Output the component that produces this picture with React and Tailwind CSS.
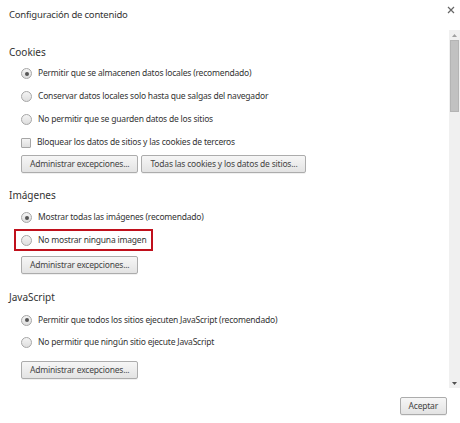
import React from "react";

const font = { fontFamily: '"Noto Sans", "Open Sans", Arial, sans-serif' };

function Radio({ checked }) {
  return (
    <span className="relative inline-block w-[11px] h-[11px] rounded-full border border-[#a6a6a6] bg-gradient-to-b from-[#f4f4f4] to-[#dedede] shrink-0">
      {checked && (
        <span className="absolute left-[2.5px] top-[2.5px] w-[4px] h-[4px] rounded-full bg-[#555]" />
      )}
    </span>
  );
}

function Check() {
  return (
    <span className="inline-block w-[10px] h-[10px] rounded-[1px] border border-[#a6a6a6] bg-gradient-to-b from-[#f4f4f4] to-[#dedede] shrink-0" />
  );
}

function Row({ children, control, h = "h-[23px]" }) {
  return (
    <div className={h + " flex items-center pl-[12px] gap-[6px] text-[8.5px] tracking-[-0.2px] text-[#333]"}>
      {control}
      <span>{children}</span>
    </div>
  );
}

function Btn({ children, className = "" }) {
  return (
    <button className={"h-[18px] px-[8px] rounded-[2px] border border-[#acacac] bg-gradient-to-b from-[#f6f6f6] to-[#e3e3e3] text-[8.5px] tracking-[-0.2px] text-[#444] leading-none shadow-[0_1px_0_rgba(0,0,0,0.06)] " + className}>
      {children}
    </button>
  );
}

function Heading({ children, className = "" }) {
  return <div className={"h-[16px] flex items-center text-[10px] text-[#333] " + className}>{children}</div>;
}

export default function App() {
  return (
    <div className="w-[460px] h-[423px] bg-white flex flex-col overflow-hidden" style={font}>
      <div className="h-[30px] flex items-start justify-between">
        <div className="pl-[9px] pt-[7px] text-[9.5px] tracking-[-0.2px] text-[#333] leading-[16px]">Configuración de contenido</div>
        <div className="pr-[5px] pt-[6px] flex">
          <svg width="8" height="8" viewBox="0 0 8 8">
            <path d="M1 1L7 7M7 1L1 7" stroke="#666" strokeWidth="1.2" />
          </svg>
        </div>
      </div>
      <div className="h-[358px] flex">
        <div className="flex-1 pl-[9px] flex flex-col">
          <Heading className="mt-[14px]">Cookies</Heading>
          <div className="mt-[2px]">
            <Row control={<Radio checked />}>Permitir que se almacenen datos locales (recomendado)</Row>
            <Row control={<Radio />}>Conservar datos locales solo hasta que salgas del navegador</Row>
            <Row control={<Radio />}>No permitir que se guarden datos de los sitios</Row>
            <Row control={<Check />}>Bloquear los datos de sitios y las cookies de terceros</Row>
          </div>
          <div className="flex gap-[3px] pl-[12px] mt-[1px]">
            <Btn>Administrar excepciones...</Btn>
            <Btn className="px-[7px]">Todas las cookies y los datos de sitios...</Btn>
          </div>
          <Heading className="mt-[14px]">Imágenes</Heading>
          <div className="mt-[3px]">
            <Row control={<Radio checked />}>Mostrar todas las imágenes (recomendado)</Row>
            <div className="h-[22px] flex items-stretch">
              <div className="ml-[5px] flex items-center gap-[6px] pl-[5px] pr-[5px] border-2 border-[#c0101c] text-[8.5px] tracking-[-0.2px] text-[#333]">
                <Radio />
                <span>No mostrar ninguna imagen</span>
              </div>
            </div>
          </div>
          <div className="flex pl-[12px] mt-[5px]">
            <Btn>Administrar excepciones...</Btn>
          </div>
          <Heading className="mt-[15px]">JavaScript</Heading>
          <div className="mt-[4px]">
            <Row h="h-[22px]" control={<Radio checked />}>Permitir que todos los sitios ejecuten JavaScript (recomendado)</Row>
            <Row h="h-[22px]" control={<Radio />}>No permitir que ningún sitio ejecute JavaScript</Row>
          </div>
          <div className="flex pl-[12px] mt-[8px]">
            <Btn>Administrar excepciones...</Btn>
          </div>
        </div>
        <div className="w-[11px] bg-[#f0f0f0] flex flex-col items-center">
          <div className="h-[10px] flex items-center justify-center">
            <svg width="5" height="3" viewBox="0 0 5 3"><path d="M0 3L2.5 0L5 3Z" fill="#a0a0a0" /></svg>
          </div>
          <div className="w-[9px] h-[72px] bg-[#c1c1c1] border border-[#b4b4b4]" />
          <div className="flex-1" />
          <div className="h-[10px] flex items-center justify-center">
            <svg width="5" height="3" viewBox="0 0 5 3"><path d="M0 0L5 0L2.5 3Z" fill="#505050" /></svg>
          </div>
        </div>
      </div>
      <div className="flex justify-end pr-[13px] pt-[9px]">
        <Btn className="px-[6px]">Aceptar</Btn>
      </div>
    </div>
  );
}
